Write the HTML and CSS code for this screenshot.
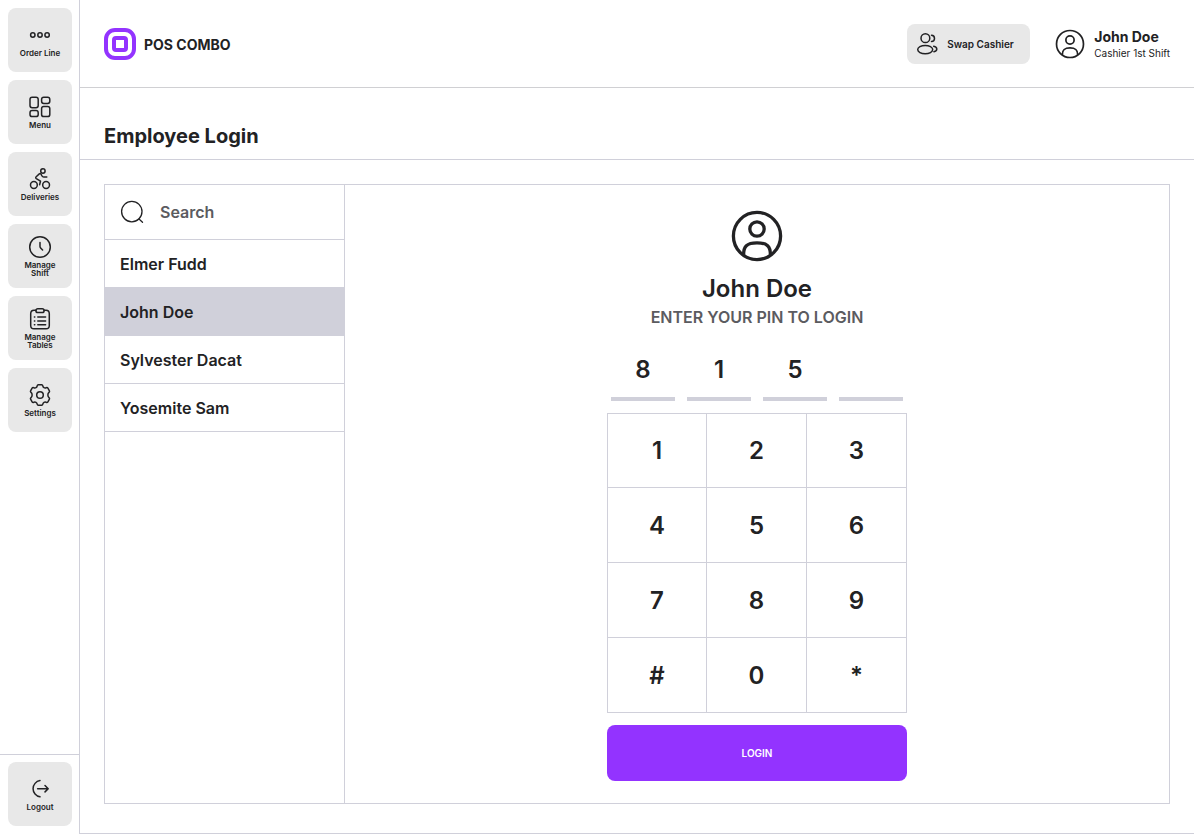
FILE: index.html
```
<!DOCTYPE html>
<html lang="en">
<head>
<meta charset="utf-8">
<title>POS Combo – Employee Login</title>
<link rel="stylesheet" href="styles.css">
</head>
<body>
<div class="app">
  <nav class="sidebar">
    <div class="nav-group">
      <button class="nav-btn">
        <svg class="icon" viewBox="0 0 24 24"><circle cx="4.8" cy="12" r="2.2"/><circle cx="12" cy="12" r="2.2"/><circle cx="19.1" cy="12" r="2.2"/></svg>
        <span>Order Line</span>
      </button>
      <button class="nav-btn">
        <svg class="icon" viewBox="0 0 24 24"><rect x="2" y="2.2" width="8.2" height="10.6" rx="2.2"/><rect x="2" y="15.6" width="8.2" height="6" rx="2.2"/><rect x="13.6" y="2.2" width="8.2" height="6.2" rx="2.2"/><rect x="13.6" y="11.4" width="8.2" height="10.2" rx="2.2"/></svg>
        <span>Menu</span>
      </button>
      <button class="nav-btn">
        <svg class="icon" viewBox="0 0 24 24"><circle cx="14.9" cy="4" r="2.2"/><circle cx="5.9" cy="18" r="3.4"/><circle cx="18.1" cy="18" r="3.4"/><path d="M11.6 17.8 12.5 14.2 8.3 11.6C7.5 11 7.6 10.3 8.2 9.7L11.3 6.9C12 6.4 12.6 6.6 13 7.2L14 9C14.4 9.7 14.9 10 15.7 10H18.8"/></svg>
        <span>Deliveries</span>
      </button>
      <button class="nav-btn">
        <svg class="icon" viewBox="0 0 24 24"><circle cx="12" cy="12" r="10.3"/><path d="M12 7.4V11.4C12 12 12.1 12.4 12.6 12.9L14.6 15"/></svg>
        <span>Manage<br>Shift</span>
      </button>
      <button class="nav-btn">
        <svg class="icon" viewBox="0 0 24 24"><path d="M8 3.3H6A3.4 3.4 0 0 0 2.7 6.7V18.4A3.4 3.4 0 0 0 6 21.8H18A3.4 3.4 0 0 0 21.3 18.4V6.7A3.4 3.4 0 0 0 18 3.3H16"/><rect x="7.9" y="1.8" width="8.2" height="3.8" rx="1.9"/><path d="M9.8 10.1H17.6M9.8 13.9H17.6M9.8 17.7H17.6M6.4 10.1H6.8M6.4 13.9H6.8M6.4 17.7H6.8"/></svg>
        <span>Manage<br>Tables</span>
      </button>
      <button class="nav-btn">
        <svg class="icon" viewBox="0 0 24 24"><circle cx="12" cy="12" r="3.3"/><path d="M10.3 1.8H13.7C14.4 1.8 14.7 2.2 14.8 2.8C15.1 4.6 16.6 5.4 18.2 4.7C19 4.4 19.5 4.5 19.9 5.2L21.4 7.8C21.8 8.5 21.6 8.9 21 9.4C19.5 10.6 19.5 13.4 21 14.6C21.6 15.1 21.8 15.5 21.4 16.2L19.9 18.8C19.5 19.5 19 19.6 18.2 19.3C16.6 18.6 15.1 19.4 14.8 21.2C14.7 21.8 14.4 22.2 13.7 22.2H10.3C9.6 22.2 9.3 21.8 9.2 21.2C8.9 19.4 7.4 18.6 5.8 19.3C5 19.6 4.5 19.5 4.1 18.8L2.6 16.2C2.2 15.5 2.4 15.1 3 14.6C4.5 13.4 4.5 10.6 3 9.4C2.4 8.9 2.2 8.5 2.6 7.8L4.1 5.2C4.5 4.5 5 4.4 5.8 4.7C7.4 5.4 8.9 4.6 9.2 2.8C9.3 2.2 9.6 1.8 10.3 1.8Z"/></svg>
        <span>Settings</span>
      </button>
    </div>
    <div class="nav-foot">
      <button class="nav-btn">
        <svg class="icon" viewBox="0 0 24 24"><path d="M12 3.6A8.2 8.2 0 0 0 12 19.8M9.6 11.7H20M17 8.5 20.2 11.7 17 14.9"/></svg>
        <span>Logout</span>
      </button>
    </div>
  </nav>

  <main class="main">
    <header class="header">
      <div class="brand">
        <svg class="logo" viewBox="0 0 32 32"><rect x="2" y="2" width="28" height="28" rx="9"/><rect x="10" y="10" width="12" height="12" rx="2"/></svg>
        <span>POS COMBO</span>
      </div>
      <div class="account">
        <button class="swap">
          <svg class="icon" viewBox="0 0 24 24"><circle cx="10.4" cy="6.2" r="4.4"/><ellipse cx="10.2" cy="17.6" rx="7.5" ry="4.2"/><path d="M16.5 3.3C20.5 3.5 20.5 9.3 16.5 9.5M18.7 14.3C22.8 15 22.8 18.9 18.9 19.7"/></svg>
          <span>Swap Cashier</span>
        </button>
        <div class="user">
          <svg class="user-pic" viewBox="0 0 56 56"><circle cx="28" cy="28" r="23.6"/><circle cx="28" cy="21" r="7.2"/><path d="M14.6 46.5C14.6 38.6 17.5 34.8 28 34.8S41.4 38.6 41.4 46.5"/></svg>
          <div class="user-text"><strong>John Doe</strong><span>Cashier 1st Shift</span></div>
        </div>
      </div>
    </header>
    <div class="title-bar"><h1>Employee Login</h1></div>

    <section class="content">
      <div class="panel">
        <aside class="staff">
          <div class="search">
            <svg class="icon" viewBox="0 0 24 24"><circle cx="11.8" cy="11.6" r="10.2"/><path d="M19 19 22.5 22.2"/></svg>
            <span>Search</span>
          </div>
          <div class="person">Elmer Fudd</div>
          <div class="person selected">John Doe</div>
          <div class="person">Sylvester Dacat</div>
          <div class="person">Yosemite Sam</div>
        </aside>
        <div class="login">
          <svg class="avatar" viewBox="0 0 56 56"><circle cx="28" cy="28" r="23.6"/><circle cx="28" cy="21" r="7.2"/><path d="M14.6 46.5C14.6 38.6 17.5 34.8 28 34.8S41.4 38.6 41.4 46.5"/></svg>
          <h2>John Doe</h2>
          <p class="hint">ENTER YOUR PIN TO LOGIN</p>
          <div class="pin"><span>8</span><span>1</span><span>5</span><span></span></div>
          <div class="keypad">
            <button>1</button><button>2</button><button>3</button>
            <button>4</button><button>5</button><button>6</button>
            <button>7</button><button>8</button><button>9</button>
            <button>#</button><button>0</button><button>*</button>
          </div>
          <button class="submit">LOGIN</button>
        </div>
      </div>
    </section>
  </main>
</div>
</body>
</html>
```
FILE: styles.css
```
* { box-sizing: border-box; margin: 0; padding: 0; }

:root {
  --ink: #222224;
  --muted: #5b5b60;
  --line: #d0d0da;
  --tile: #e8e8e8;
  --accent: #9333ff;
}

body {
  font-family: Inter, "Liberation Sans", sans-serif;
  color: var(--ink);
  background: #fff;
}

button { border: 0; background: none; font: inherit; color: inherit; }

svg {
  display: block;
  flex: none;
  fill: none;
  stroke: var(--ink);
  stroke-linecap: round;
  stroke-linejoin: round;
}

.icon { width: 24px; height: 24px; stroke-width: 1.5; }

.app { display: flex; width: 1194px; height: 834px; overflow: hidden; }

/* Sidebar */
.sidebar {
  display: flex;
  flex-direction: column;
  justify-content: space-between;
  width: 80px;
  border-right: 1px solid var(--line);
}
.nav-group, .nav-foot { display: flex; flex-direction: column; gap: 8px; padding: 8px; }
.nav-foot { padding-top: 7px; border-top: 1px solid var(--line); }
.nav-btn {
  display: flex;
  flex-direction: column;
  align-items: center;
  justify-content: center;
  gap: 2px;
  width: 64px;
  height: 64px;
  border-radius: 8px;
  background: var(--tile);
  font-size: 8px;
  line-height: 8px;
  font-weight: 600;
  text-align: center;
}

/* Header */
.main {
  display: flex;
  flex-direction: column;
  flex: 1;
  border-bottom: 1px solid var(--line);
}
.header {
  display: flex;
  align-items: center;
  justify-content: space-between;
  height: 88px;
  padding: 1px 24px 0;
  border-bottom: 1px solid #d0d0d3;
}
.brand { display: flex; align-items: center; gap: 8px; font-size: 14px; font-weight: 700; }
.logo { width: 32px; height: 32px; stroke: var(--accent); stroke-width: 4; }
.account { display: flex; align-items: center; gap: 24px; }
.swap {
  display: flex;
  align-items: center;
  gap: 8px;
  width: 123px;
  height: 40px;
  padding-left: 8px;
  border-radius: 8px;
  background: var(--tile);
  font-size: 10px;
  font-weight: 600;
}
.user { display: flex; align-items: center; gap: 8px; }
.user-pic { width: 32px; height: 32px; stroke-width: 3; }
.user-text { display: flex; flex-direction: column; gap: 1px; }
.user-text strong { font-size: 14px; line-height: 17px; font-weight: 700; }
.user-text span { font-size: 10px; line-height: 14px; }

.title-bar {
  display: flex;
  align-items: flex-end;
  height: 72px;
  padding: 0 24px 11px;
  border-bottom: 1px solid var(--line);
}
.title-bar h1 { font-size: 20px; line-height: 24px; font-weight: 700; }

/* Login panel */
.content { display: flex; flex: 1; padding: 24px 24px 29px; }
.panel { display: flex; flex: 1; border: 1px solid var(--line); }
.staff { width: 240px; border-right: 1px solid var(--line); font-size: 16px; font-weight: 600; }
.search {
  display: flex;
  align-items: center;
  gap: 16px;
  height: 55px;
  padding-left: 15px;
  border-bottom: 1px solid var(--line);
  color: var(--muted);
}
.search .icon { stroke-width: 1.3; }
.person {
  display: flex;
  align-items: center;
  height: 48px;
  padding: 1px 0 0 15px;
  border-bottom: 1px solid var(--line);
}
.person.selected { background: var(--line); }

.login { display: flex; flex-direction: column; align-items: center; flex: 1; padding-top: 23px; }
.avatar { width: 56px; height: 56px; stroke-width: 3.3; }
.login h2 { margin-top: 9px; font-size: 24px; line-height: 32px; font-weight: 600; }
.hint { font-size: 16px; line-height: 24px; font-weight: 600; color: var(--muted); }
.pin { display: flex; gap: 12px; margin-top: 20px; }
.pin span {
  width: 64px;
  height: 52px;
  border-bottom: 4px solid var(--line);
  font-size: 24px;
  line-height: 41px;
  font-weight: 600;
  text-align: center;
}
.keypad {
  display: grid;
  grid-template-columns: repeat(3, 100px);
  grid-template-rows: repeat(4, 75px);
  margin-top: 12px;
}
.keypad button {
  border-right: 1px solid var(--line);
  border-bottom: 1px solid var(--line);
  font-size: 24px;
  font-weight: 600;
}
.keypad button:nth-child(3n + 1) { border-left: 1px solid var(--line); }
.keypad button:nth-child(-n + 3) { border-top: 1px solid var(--line); }
.submit {
  width: 300px;
  height: 56px;
  margin-top: 12px;
  border-radius: 8px;
  background: var(--accent);
  color: #fff;
  font-size: 10px;
  font-weight: 600;
}
```
